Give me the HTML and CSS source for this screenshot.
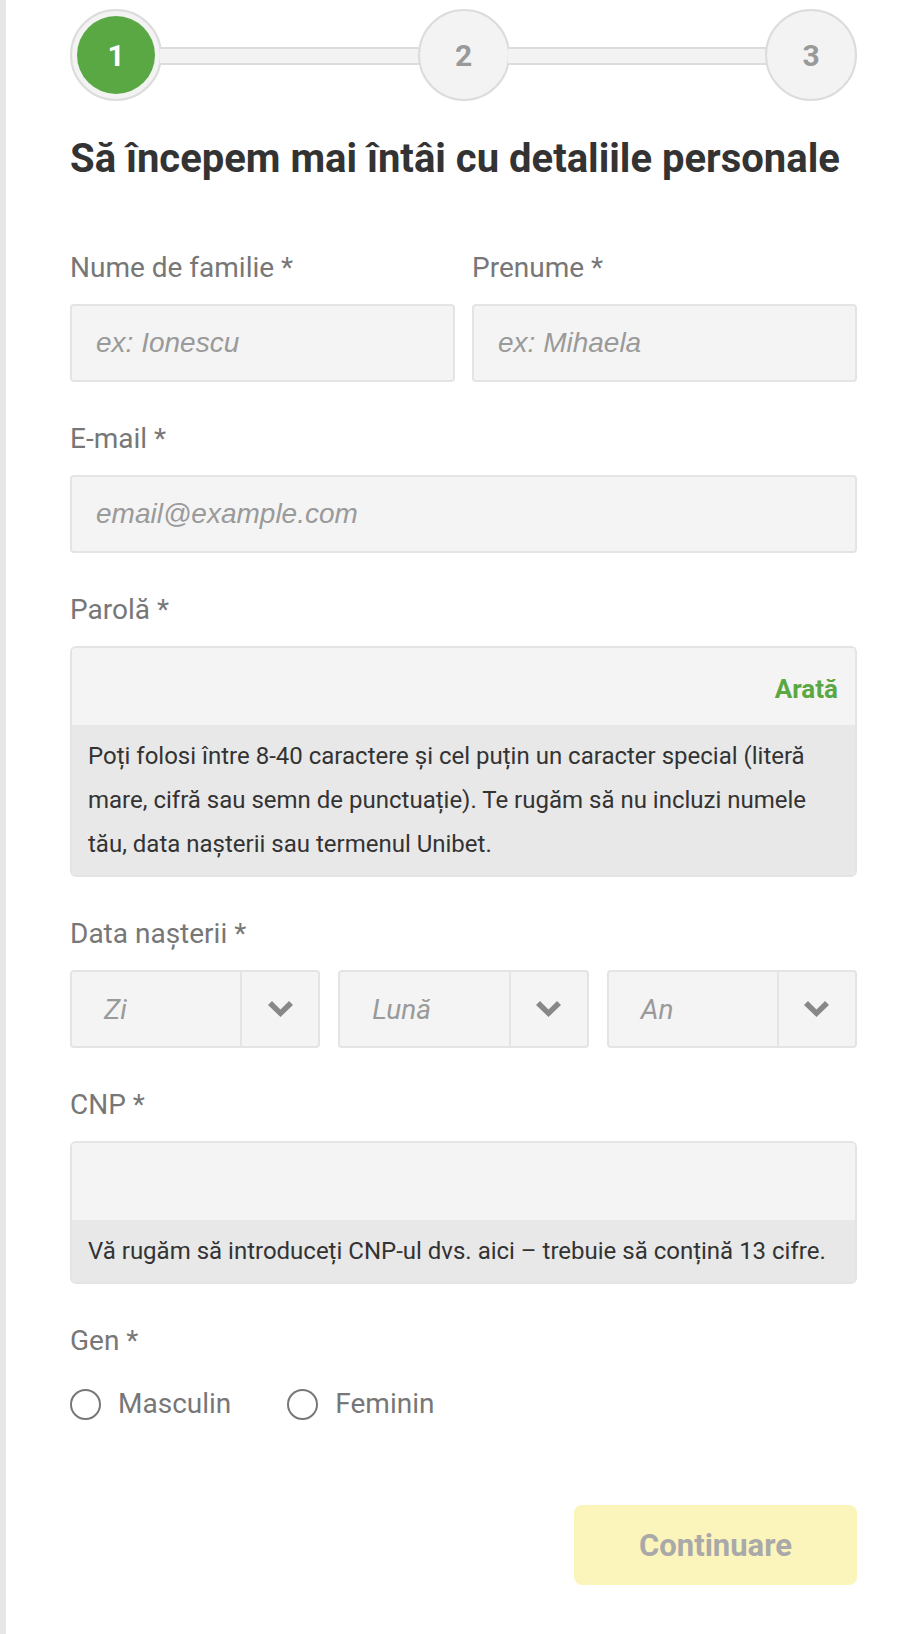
FILE: index.html
```html
<!DOCTYPE html>
<html lang="ro">

<head>
  <meta charset="utf-8">
  <title>Înregistrare - detalii personale</title>
  <link rel="stylesheet" href="styles.css">
</head>

<body>
  <div class="page">
    <div class="stepper">
      <div class="step step-active"><span>1</span></div>
      <div class="step-line"></div>
      <div class="step"><span>2</span></div>
      <div class="step-line"></div>
      <div class="step"><span>3</span></div>
    </div>

    <h1>Să începem mai întâi cu detaliile personale</h1>

    <form class="form" onsubmit="return false">
      <div class="row-2">
        <div class="field">
          <label for="last">Nume de familie *</label>
          <input id="last" class="input" type="text" placeholder="ex: Ionescu">
        </div>
        <div class="field">
          <label for="first">Prenume *</label>
          <input id="first" class="input" type="text" placeholder="ex: Mihaela">
        </div>
      </div>

      <div class="field">
        <label for="email">E-mail *</label>
        <input id="email" class="input" type="email" placeholder="email@example.com">
      </div>

      <div class="field">
        <label for="password">Parolă *</label>
        <div class="boxed">
          <div class="boxed-input">
            <input id="password" type="password">
            <button type="button" class="show">Arată</button>
          </div>
          <p class="hint">Poți folosi între 8-40 caractere și cel puțin un caracter special (literă mare, cifră sau semn de punctuație). Te rugăm să nu incluzi numele tău, data nașterii sau termenul Unibet.</p>
        </div>
      </div>

      <div class="field">
        <label>Data naşterii *</label>
        <div class="row-3">
          <div class="select">
            <span class="select-value">Zi</span>
            <span class="select-arrow"><svg width="25" height="16" viewBox="0 0 25 16"><polygon points="0,4 4,0 12.5,8.5 21,0 25,4 12.5,16" fill="#888"/></svg></span>
          </div>
          <div class="select">
            <span class="select-value">Lună</span>
            <span class="select-arrow"><svg width="25" height="16" viewBox="0 0 25 16"><polygon points="0,4 4,0 12.5,8.5 21,0 25,4 12.5,16" fill="#888"/></svg></span>
          </div>
          <div class="select">
            <span class="select-value">An</span>
            <span class="select-arrow"><svg width="25" height="16" viewBox="0 0 25 16"><polygon points="0,4 4,0 12.5,8.5 21,0 25,4 12.5,16" fill="#888"/></svg></span>
          </div>
        </div>
      </div>

      <div class="field">
        <label for="cnp">CNP *</label>
        <div class="boxed">
          <div class="boxed-input">
            <input id="cnp" type="text">
          </div>
          <p class="hint">Vă rugăm să introduceți CNP-ul dvs. aici – trebuie să conțină 13 cifre.</p>
        </div>
      </div>

      <div class="field">
        <label>Gen *</label>
        <div class="radios">
          <label class="radio"><input type="radio" name="gender"> Masculin</label>
          <label class="radio"><input type="radio" name="gender"> Feminin</label>
        </div>
      </div>

      <div class="actions">
        <button type="submit" class="continue" disabled>Continuare</button>
      </div>
    </form>
  </div>
</body>

</html>
```

FILE: styles.css
```css
body {
  margin: 0;
  font-family: Roboto, "Noto Sans", sans-serif;
  color: #333;
  background: #fff;
}

.page {
  box-sizing: border-box;
  min-height: 100vh;
  border-left: 6px solid #e6e6e6;
  padding: 9px 65px 40px 64px;
}

/* stepper */

.stepper {
  display: flex;
  align-items: center;
}

.step {
  box-sizing: border-box;
  width: 92px;
  height: 92px;
  flex: none;
  border: 2px solid #dcdcdc;
  border-radius: 50%;
  background: #f3f3f3;
  display: flex;
  align-items: center;
  justify-content: center;
  font-size: 30px;
  font-weight: bold;
  color: #999;
}

.step-active {
  padding: 5px;
}

.step-active span {
  width: 100%;
  height: 100%;
  border-radius: 50%;
  background: #5aa843;
  color: #fff;
  display: flex;
  align-items: center;
  justify-content: center;
}

.step-line {
  flex: 1;
  box-sizing: border-box;
  height: 18px;
  margin: 2px -2px 0;
  background: #f3f3f3;
  border-top: 2px solid #dcdcdc;
  border-bottom: 2px solid #dcdcdc;
}

h1 {
  margin: 35px 0 69px;
  font-size: 40px;
  line-height: 46px;
  font-weight: bold;
  color: #333;
}

/* form */

.field {
  margin-bottom: 40px;
}

.field > label {
  display: block;
  margin-bottom: 19px;
  font-size: 28px;
  line-height: 34px;
  color: #777;
}

.row-2 {
  display: grid;
  grid-template-columns: 1fr 1fr;
  gap: 17px;
}

.row-3 {
  display: grid;
  grid-template-columns: 1fr 1fr 1fr;
  gap: 18px;
}

.input {
  display: block;
  box-sizing: border-box;
  width: 100%;
  height: 78px;
  padding: 0 24px;
  border: 2px solid #e4e4e4;
  border-radius: 4px;
  background: #f4f4f4;
  font: 28px "Liberation Sans", Arial, sans-serif;
  color: #333;
  outline: none;
}

.input::placeholder {
  font-style: italic;
  color: #9a9a9a;
}

.boxed {
  border: 2px solid #e4e4e4;
  border-radius: 6px;
  overflow: hidden;
}

.boxed-input {
  display: flex;
  align-items: center;
  height: 77px;
  background: #f4f4f4;
}

.boxed-input input {
  flex: 1;
  min-width: 0;
  height: 100%;
  padding: 0 24px;
  border: none;
  background: transparent;
  font: 28px "Liberation Sans", Arial, sans-serif;
  outline: none;
}

.show {
  border: none;
  background: none;
  padding: 4px 17px 0 10px;
  font: bold 26px Roboto, sans-serif;
  color: #5aa843;
}

.hint {
  margin: 0;
  padding: 9px 16px;
  background: #e8e8e8;
  font-size: 24px;
  line-height: 44px;
  color: #333;
}

.select {
  display: flex;
  box-sizing: border-box;
  height: 78px;
  border: 2px solid #e4e4e4;
  border-radius: 4px;
  background: #f4f4f4;
}

.select-value {
  flex: 1;
  display: flex;
  align-items: center;
  padding-left: 32px;
  font-size: 28px;
  font-style: italic;
  color: #9a9a9a;
}

.select-arrow {
  width: 76px;
  flex: none;
  display: flex;
  align-items: center;
  justify-content: center;
  border-left: 2px solid #e4e4e4;
}

.radios {
  display: flex;
  gap: 56px;
  margin-top: 29px;
}

.radio {
  display: inline-flex;
  align-items: center;
  gap: 17px;
  font-size: 28px;
  line-height: 34px;
  color: #777;
}

.radio input {
  appearance: none;
  -webkit-appearance: none;
  margin: 0;
  width: 31px;
  height: 31px;
  border: 2px solid #777;
  border-radius: 50%;
  background: #fff;
}

.actions {
  display: flex;
  justify-content: flex-end;
  margin-top: 84px;
}

.continue {
  width: 283px;
  height: 80px;
  border: none;
  border-radius: 8px;
  background: #fcf5bb;
  font: bold 31px Roboto, sans-serif;
  color: #a9a9a9;
}
```
